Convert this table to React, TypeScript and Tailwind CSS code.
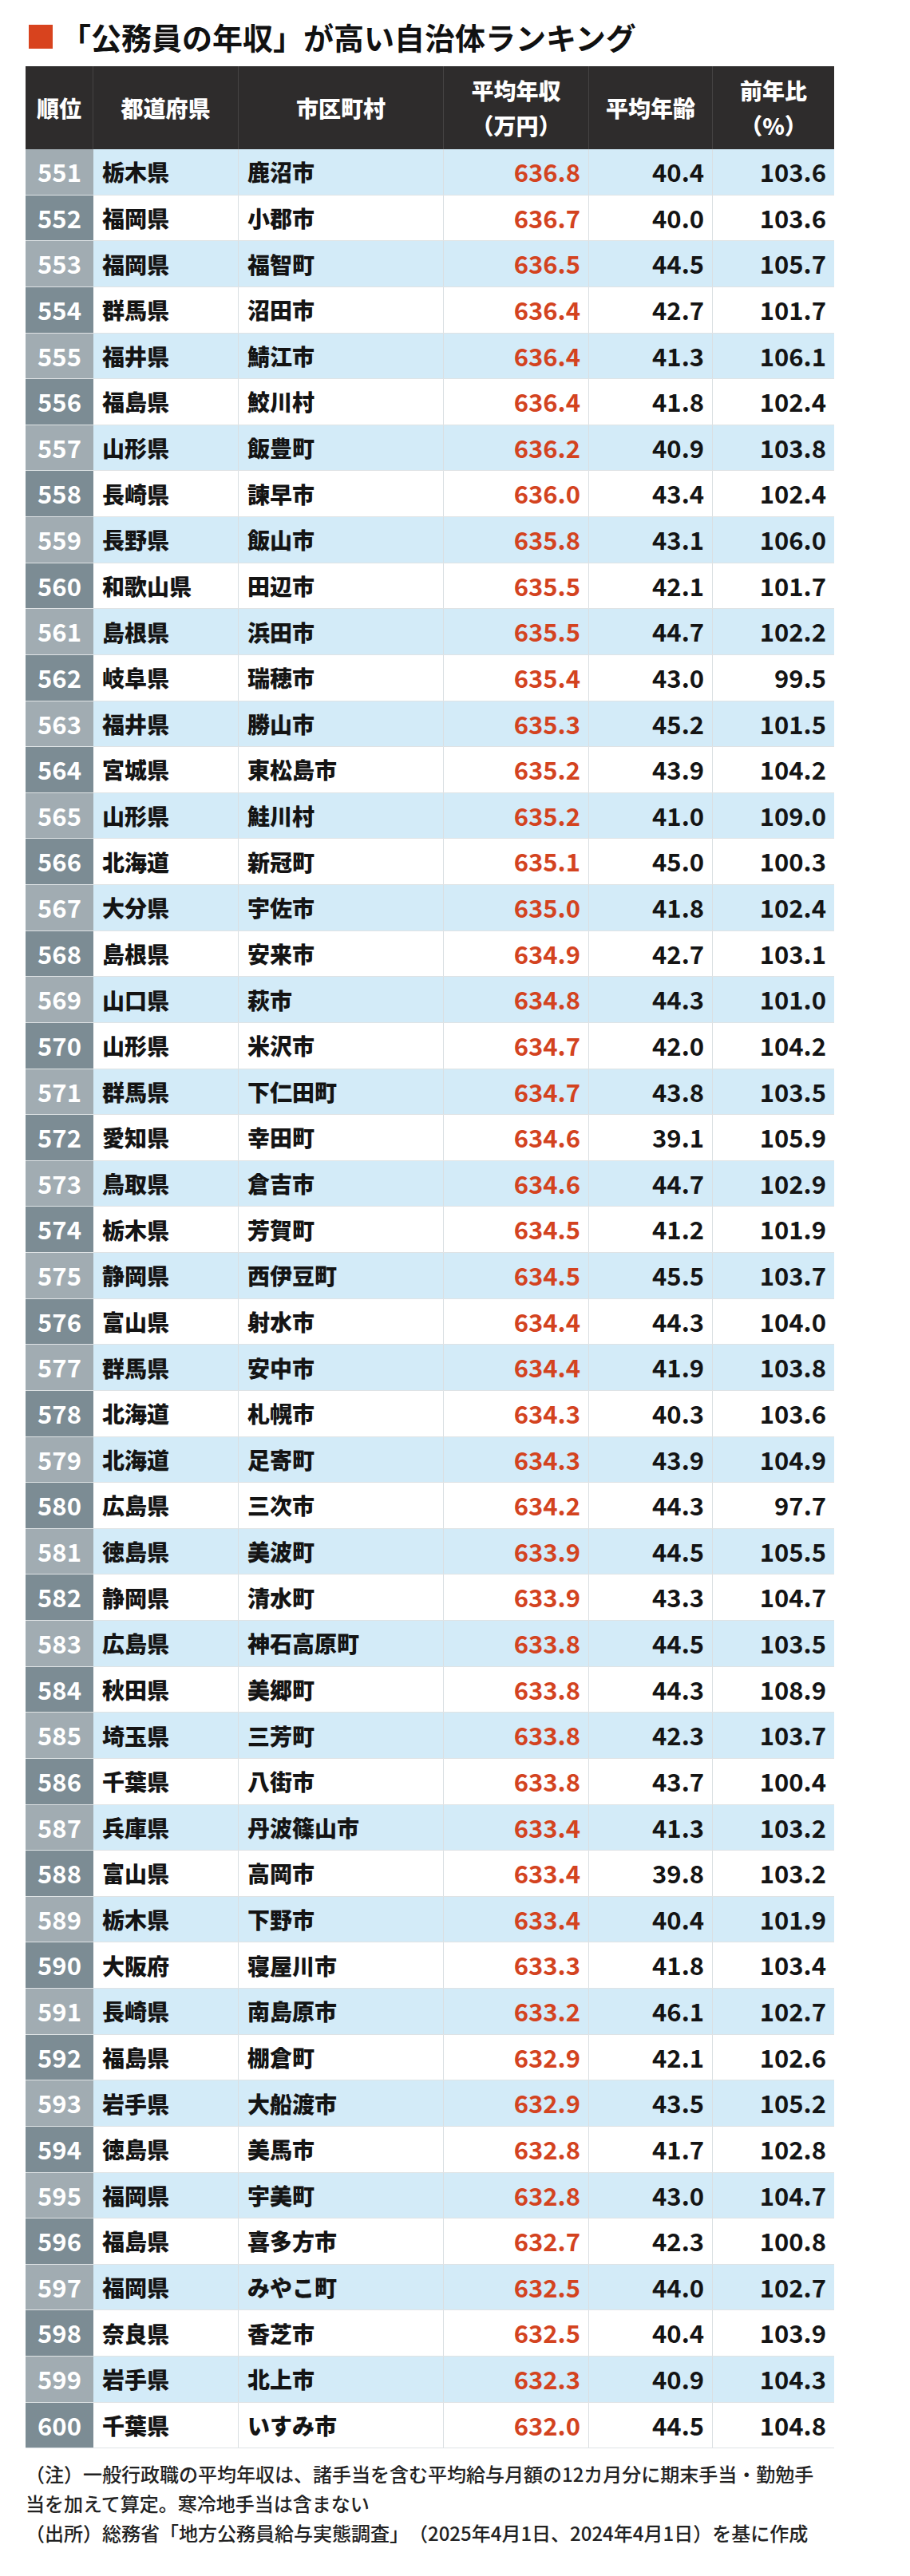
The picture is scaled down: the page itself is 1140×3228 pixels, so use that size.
const rows: [string, string, string, string, string][] = [
  ['栃木県', '鹿沼市', '636.8', '40.4', '103.6'],
  ['福岡県', '小郡市', '636.7', '40.0', '103.6'],
  ['福岡県', '福智町', '636.5', '44.5', '105.7'],
  ['群馬県', '沼田市', '636.4', '42.7', '101.7'],
  ['福井県', '鯖江市', '636.4', '41.3', '106.1'],
  ['福島県', '鮫川村', '636.4', '41.8', '102.4'],
  ['山形県', '飯豊町', '636.2', '40.9', '103.8'],
  ['長崎県', '諫早市', '636.0', '43.4', '102.4'],
  ['長野県', '飯山市', '635.8', '43.1', '106.0'],
  ['和歌山県', '田辺市', '635.5', '42.1', '101.7'],
  ['島根県', '浜田市', '635.5', '44.7', '102.2'],
  ['岐阜県', '瑞穂市', '635.4', '43.0', '99.5'],
  ['福井県', '勝山市', '635.3', '45.2', '101.5'],
  ['宮城県', '東松島市', '635.2', '43.9', '104.2'],
  ['山形県', '鮭川村', '635.2', '41.0', '109.0'],
  ['北海道', '新冠町', '635.1', '45.0', '100.3'],
  ['大分県', '宇佐市', '635.0', '41.8', '102.4'],
  ['島根県', '安来市', '634.9', '42.7', '103.1'],
  ['山口県', '萩市', '634.8', '44.3', '101.0'],
  ['山形県', '米沢市', '634.7', '42.0', '104.2'],
  ['群馬県', '下仁田町', '634.7', '43.8', '103.5'],
  ['愛知県', '幸田町', '634.6', '39.1', '105.9'],
  ['鳥取県', '倉吉市', '634.6', '44.7', '102.9'],
  ['栃木県', '芳賀町', '634.5', '41.2', '101.9'],
  ['静岡県', '西伊豆町', '634.5', '45.5', '103.7'],
  ['富山県', '射水市', '634.4', '44.3', '104.0'],
  ['群馬県', '安中市', '634.4', '41.9', '103.8'],
  ['北海道', '札幌市', '634.3', '40.3', '103.6'],
  ['北海道', '足寄町', '634.3', '43.9', '104.9'],
  ['広島県', '三次市', '634.2', '44.3', '97.7'],
  ['徳島県', '美波町', '633.9', '44.5', '105.5'],
  ['静岡県', '清水町', '633.9', '43.3', '104.7'],
  ['広島県', '神石高原町', '633.8', '44.5', '103.5'],
  ['秋田県', '美郷町', '633.8', '44.3', '108.9'],
  ['埼玉県', '三芳町', '633.8', '42.3', '103.7'],
  ['千葉県', '八街市', '633.8', '43.7', '100.4'],
  ['兵庫県', '丹波篠山市', '633.4', '41.3', '103.2'],
  ['富山県', '高岡市', '633.4', '39.8', '103.2'],
  ['栃木県', '下野市', '633.4', '40.4', '101.9'],
  ['大阪府', '寝屋川市', '633.3', '41.8', '103.4'],
  ['長崎県', '南島原市', '633.2', '46.1', '102.7'],
  ['福島県', '棚倉町', '632.9', '42.1', '102.6'],
  ['岩手県', '大船渡市', '632.9', '43.5', '105.2'],
  ['徳島県', '美馬市', '632.8', '41.7', '102.8'],
  ['福岡県', '宇美町', '632.8', '43.0', '104.7'],
  ['福島県', '喜多方市', '632.7', '42.3', '100.8'],
  ['福岡県', 'みやこ町', '632.5', '44.0', '102.7'],
  ['奈良県', '香芝市', '632.5', '40.4', '103.9'],
  ['岩手県', '北上市', '632.3', '40.9', '104.3'],
  ['千葉県', 'いすみ市', '632.0', '44.5', '104.8'],
]

const cols = 'grid grid-cols-[85px_182px_257px_182px_155px_152px]'

function Row({ rank, data }: { rank: number; data: [string, string, string, string, string] }) {
  const odd = rank % 2 === 1
  const [pref, city, pay, age, ratio] = data
  return (
    <div className={`${cols} h-[57.64px] border-b border-[#dfe3e5] ${odd ? 'bg-[#d3ebf8]' : 'bg-white'}`}>
      <div
        className={`flex items-center justify-center text-[31px] font-bold text-white ${odd ? 'bg-[#a1acb2]' : 'bg-[#7c8c94]'}`}
      >
        {rank}
      </div>
      <div className="flex items-center pl-[11px] text-[28px] font-black text-[#141414] border-r border-[#dadfe2]">
        {pref}
      </div>
      <div className="flex items-center pl-[11px] text-[28px] font-black text-[#141414] border-r border-[#dadfe2]">
        {city}
      </div>
      <div className="flex items-center justify-end pr-[10px] text-[31px] font-bold text-[#d3431f] border-r border-[#dadfe2]">
        {pay}
      </div>
      <div className="flex items-center justify-end pr-[10px] text-[31px] font-bold text-[#141414] border-r border-[#dadfe2]">
        {age}
      </div>
      <div className="flex items-center justify-end pr-[10px] text-[31px] font-bold text-[#141414]">
        {ratio}
      </div>
    </div>
  )
}

export default function App() {
  return (
    <div className="w-[1140px] bg-white px-[32px] pt-[20px] pb-[40px] font-['Noto_Sans_CJK_JP','Noto_Sans',sans-serif] [text-spacing-trim:space-all]">
      <div className="flex h-[52px] items-center gap-[10px] pl-[4px]">
        <span className="h-[30px] w-[30px] bg-[#d8431e]" />
        <h1 className="text-[38px] font-bold leading-none text-[#111]">「公務員の年収」が高い自治体ランキング</h1>
      </div>

      <div className="mt-[11px] w-[1013px]">
        <div className={`${cols} h-[104px] bg-[#2e2c2c] text-[28px] font-black leading-[44px] text-white`}>
          <div className="flex items-center justify-center border-r border-[#454343]">順位</div>
          <div className="flex items-center justify-center border-r border-[#454343]">都道府県</div>
          <div className="flex items-center justify-center border-r border-[#454343]">市区町村</div>
          <div className="flex flex-col items-center justify-center border-r border-[#454343]">
            <span>平均年収</span>
            <span>（万円）</span>
          </div>
          <div className="flex items-center justify-center border-r border-[#454343]">平均年齢</div>
          <div className="flex flex-col items-center justify-center">
            <span>前年比</span>
            <span>（%）</span>
          </div>
        </div>

        {rows.map((r, i) => (
          <Row key={i} rank={551 + i} data={r} />
        ))}
      </div>

      <div className="mt-[13px] w-[1000px] text-[24px] font-medium leading-[37px] text-[#222]">
        <p>（注）一般行政職の平均年収は、諸手当を含む平均給与月額の12カ月分に期末手当・勤勉手当を加えて算定。寒冷地手当は含まない</p>
        <p>（出所）総務省「地方公務員給与実態調査」（2025年4月1日、2024年4月1日）を基に作成</p>
      </div>
    </div>
  )
}
